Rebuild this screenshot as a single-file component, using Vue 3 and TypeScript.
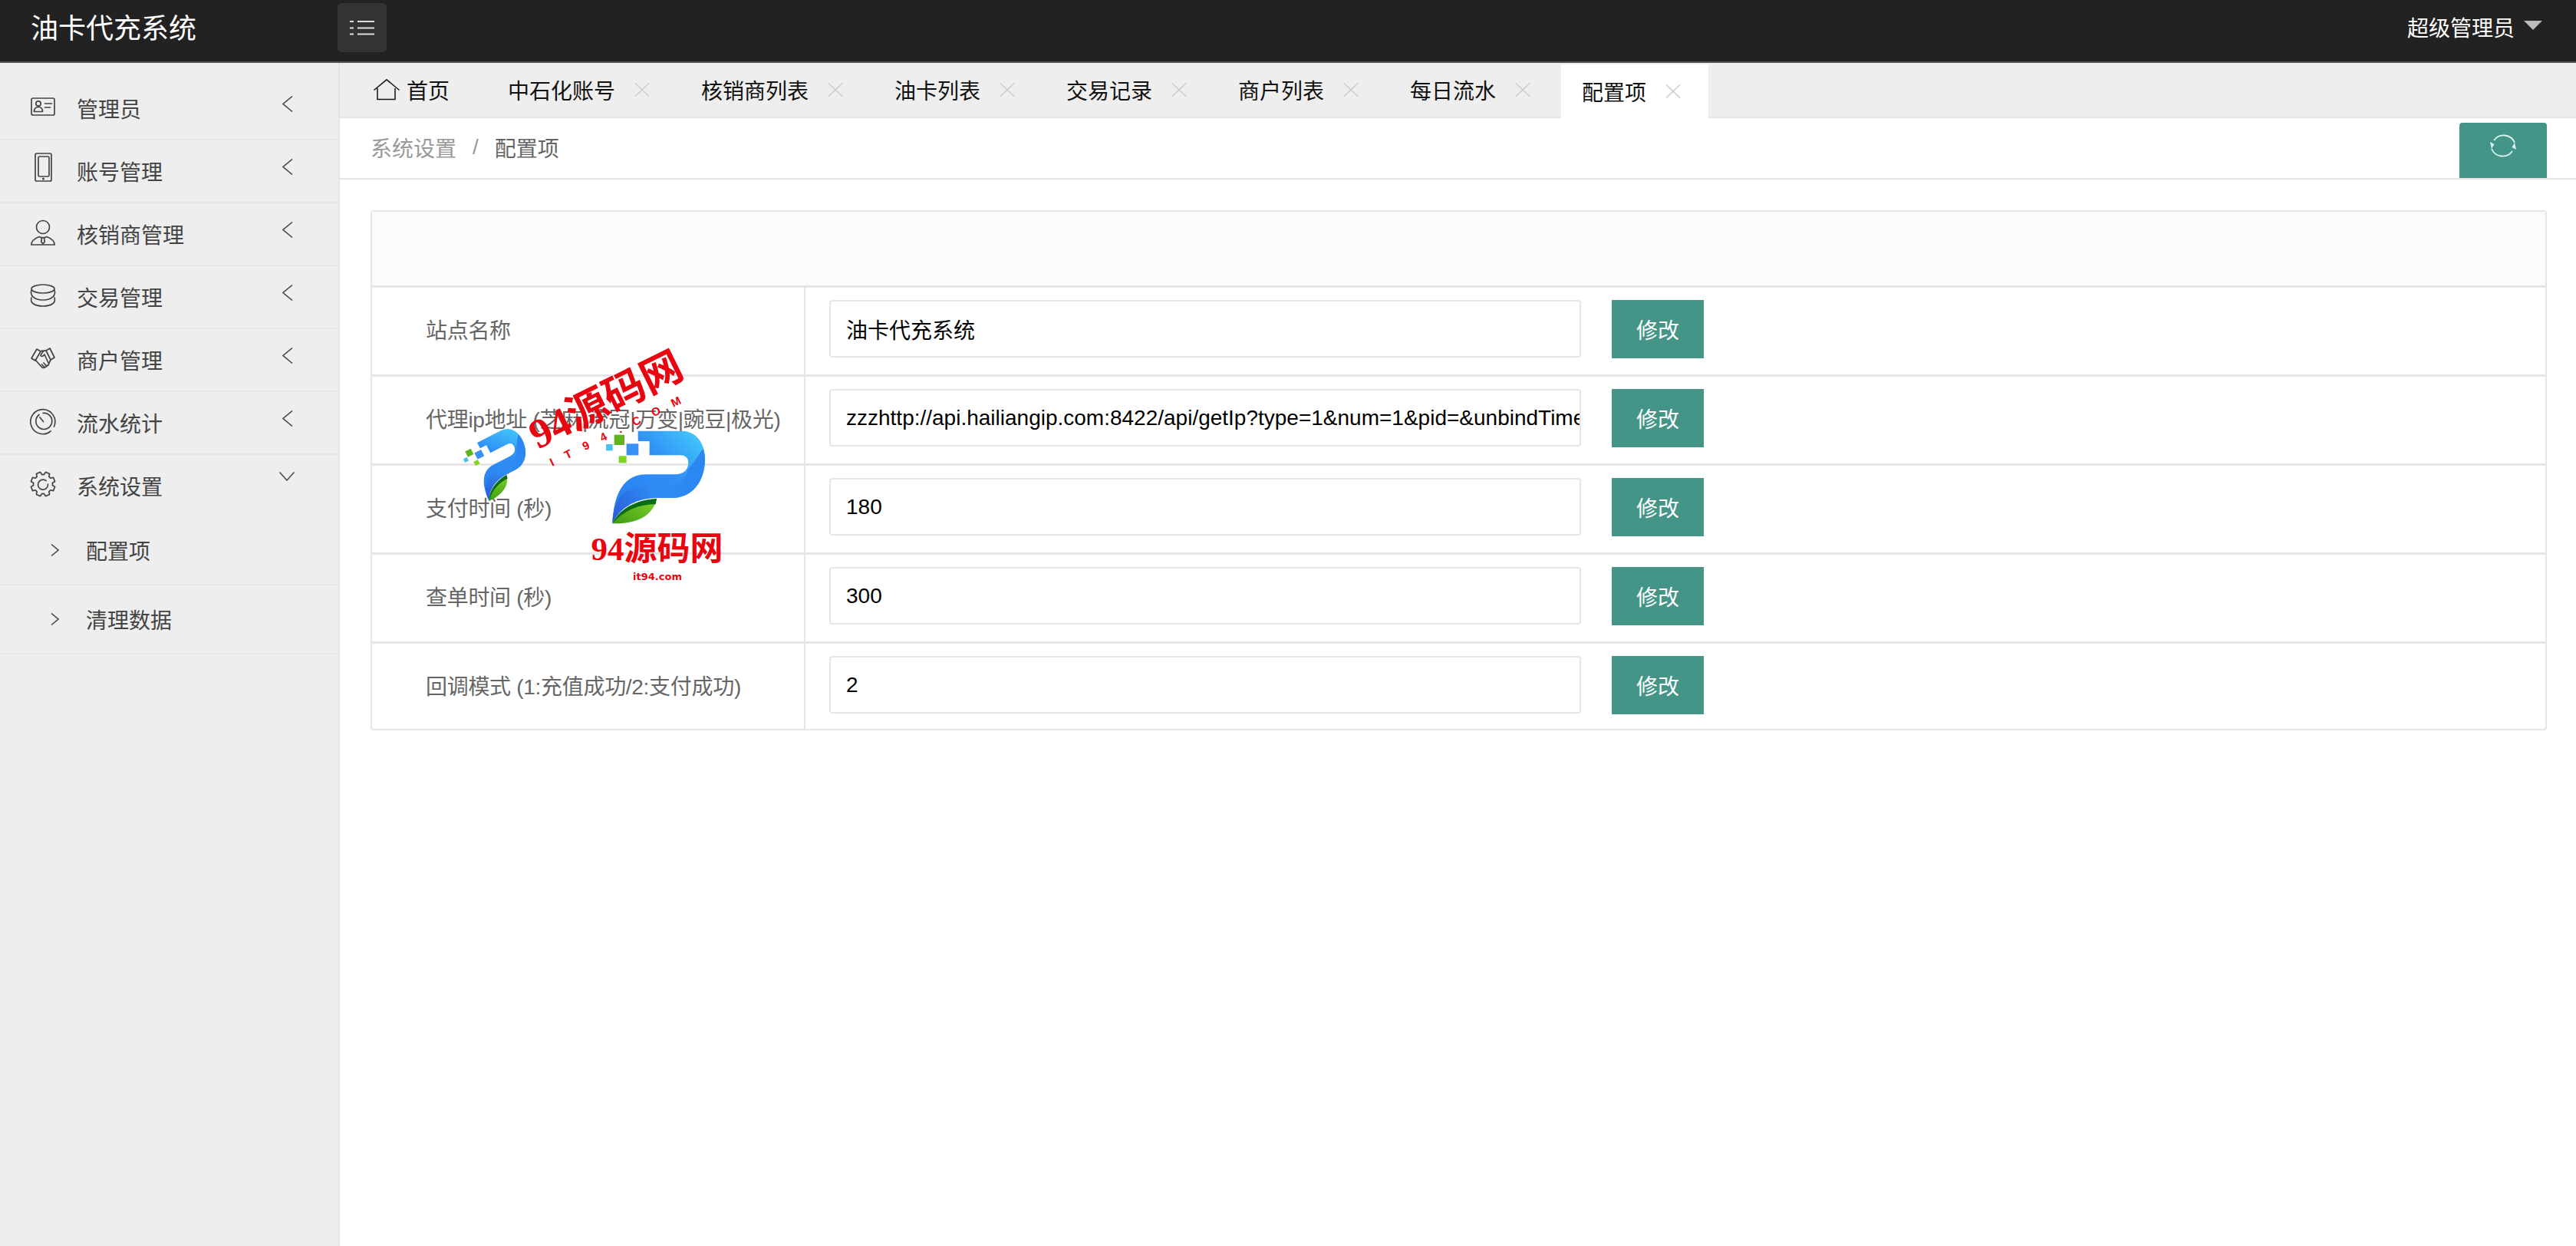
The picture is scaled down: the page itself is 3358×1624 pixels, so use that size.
<template>
  <div class="app">
    <header class="topbar">
      <div class="brand">油卡代充系统</div>
      <button class="toggle" type="button">
        <svg width="32" height="20" viewBox="0 0 32 20" fill="none" stroke="#ddd" stroke-width="2">
          <path d="M0 2h5M10 2h22M0 10.500h5M10 10.500h22M0 18.500h5M10 18.500h22" />
        </svg>
      </button>
      <div class="user">超级管理员<span class="caret" /></div>
    </header>

    <div class="body">
      <aside class="sidebar">
        <div v-for="item in menu" :key="item.label" class="menu-item" :class="{ open: item.open }">
          <svg class="menu-icon" width="32" height="40" viewBox="0 0 32 40" fill="none" stroke="#444"
               stroke-width="1.700" stroke-linecap="round" stroke-linejoin="round">
            <template v-if="item.icon === 'card'">
              <rect x="1" y="9" width="30" height="22" rx="2" />
              <circle cx="10" cy="16" r="3.200" />
              <path d="M4.500 26.500c0-4 2-6 5.500-6s5.500 2 5.500 6zM18.500 16h9M18.500 21h7" />
            </template>
            <template v-else-if="item.icon === 'tablet'">
              <rect x="6" y="-1" width="21" height="36" rx="2" />
              <rect x="10" y="3" width="14" height="26" rx="1.500" />
              <circle cx="16.500" cy="32" r="0.700" />
            </template>
            <template v-else-if="item.icon === 'person'">
              <circle cx="16" cy="13" r="8.500" />
              <path d="M0.800 36H31.200C31 30 26 27.500 21 25.500C18 27.200 14 27.200 11 25.500C6 27.500 1 30 0.800 36Z" />
              <path d="M14.500 27l-0.800 5 2.300 3 2.300-3-0.800-5" />
            </template>
            <template v-else-if="item.icon === 'coins'">
              <ellipse cx="16" cy="11.500" rx="15" ry="5.500" />
              <path d="M1 13C-1 20 4 26 16 26S33 20 31 13M1 23C-1 29 4 34 16 34S33 29 31 23" />
            </template>
            <template v-else-if="item.icon === 'hands'">
              <path d="M1 20L8 8L13 11L6 23ZM31 19L25 7L20 10L26 22Z" />
              <path d="M6 22L15 32C17 33 18 32 18 31C20 32 21 31 21 29C23 30 24 28 23.500 27L26 22" />
              <path d="M20 10C17 9 16 11 13 16C13 18 16 18 18 15L23.500 27M13 11C15 9.500 16 10 17.500 10.500M20.500 30L17 26M18 32L14.500 28" />
            </template>
            <template v-else-if="item.icon === 'dial'">
              <path d="M26 33A16 16 0 1 1 30.500 27" />
              <path d="M11 11.500A10.500 10.500 0 1 0 16 9.500" />
              <path d="M16.500 20.500L12 15" />
            </template>
            <template v-else>
              <path :d="gearPath" />
              <path d="M20 15.500A6.500 6.500 0 1 0 22.500 20" />
            </template>
          </svg>
          <span class="menu-label">{{ item.label }}</span>
          <svg v-if="item.open" class="arrow-open" width="20" height="12" viewBox="0 0 20 12" fill="none" stroke="#444" stroke-width="1.500">
            <path d="M0.500 0.500L10 11L19.500 0.500" />
          </svg>
          <svg v-else class="arrow" width="14" height="21" viewBox="0 0 14 21" fill="none" stroke="#444" stroke-width="1.500">
            <path d="M13 0.500L1 10.500L13 20.500" />
          </svg>
        </div>
        <div v-for="sub in subMenu" :key="sub" class="sub-item">
          <svg width="11" height="16" viewBox="0 0 11 16" fill="none" stroke="#444" stroke-width="1.500">
            <path d="M1 0.500L10 8L1 15.500" />
          </svg>
          <span>{{ sub }}</span>
        </div>
      </aside>

      <main class="main">
        <nav class="tabs">
          <div class="tab home">
            <svg width="34" height="28" viewBox="0 0 34 28" fill="none" stroke="#111" stroke-width="1.500">
              <path d="M0.500 14.500L17 0.800L33.500 14.500M5 12V26.500H28V12" />
            </svg>
            <span>首页</span>
          </div>
          <div v-for="tab in tabs" :key="tab" class="tab" :class="{ active: tab === activeTab }">
            <span>{{ tab }}</span>
            <svg width="20" height="18" viewBox="0 0 20 18" stroke="#ccc" stroke-width="1.500">
              <path d="M1 0.500L19 17.500M19 0.500L1 17.500" />
            </svg>
          </div>
        </nav>

        <div class="crumbs">
          <span class="crumb-parent">系统设置</span>
          <span class="crumb-sep">/</span>
          <span class="crumb-current">配置项</span>
          <button class="refresh" type="button">
            <svg width="36" height="36" viewBox="0 0 36 36" fill="none" stroke="#d8f5ef" stroke-width="1.800">
              <path d="M6 11A15.500 15.500 0 0 1 33 14M30 25A15.500 15.500 0 0 1 3 22" />
              <path d="M3 22L1 13L6.500 16ZM33 14L35 23L29.500 20Z" fill="#d8f5ef" stroke="none" />
            </svg>
          </button>
        </div>

        <section class="settings">
          <div class="settings-head" />
          <div v-for="row in rows" :key="row.label" class="row">
            <div class="row-label">{{ row.label }}</div>
            <div class="row-field">
              <input class="field" type="text" readonly :value="row.value">
              <button class="save" type="button">修改</button>
            </div>
          </div>
        </section>
      </main>
    </div>

    <!-- site watermark stamped over the page -->
    <svg class="watermark" width="370" height="330" viewBox="590 440 370 330">
      <defs>
        <linearGradient id="pLight" x1="0" y1="1" x2="1" y2="0">
          <stop offset="0" stop-color="#2a7cf0" />
          <stop offset="0.600" stop-color="#2f8ff5" />
          <stop offset="1" stop-color="#45d0fb" />
        </linearGradient>
        <linearGradient id="pDark" x1="0" y1="1" x2="1" y2="0.300">
          <stop offset="0" stop-color="#2a58d8" />
          <stop offset="0.500" stop-color="#2e8cf3" />
          <stop offset="1" stop-color="#2b86f2" />
        </linearGradient>
        <linearGradient id="leaf" x1="0" y1="1" x2="1" y2="0">
          <stop offset="0" stop-color="#3f9a12" />
          <stop offset="1" stop-color="#7fd42a" />
        </linearGradient>
        <g id="pMark">
          <path fill="url(#leaf)" d="M85 397C110 345 170 305 258 300C245 360 190 400 85 397Z" />
          <path fill="#0a6d16" d="M85 397C110 345 170 305 258 300L254 322C190 322 130 345 85 397Z" />
          <path fill="url(#pLight)" d="M185 35H355C415 35 447 85 447 145C447 235 395 297 320 297H250C170 300 110 340 85 397C88 320 110 205 215 205H330C365 205 382 185 382 160C382 140 370 130 350 130H230V75H185Z" />
          <path fill="url(#pDark)" d="M85 397C88 340 105 300 125 280C150 258 190 247 240 247H320C350 245 370 225 380 185C400 170 425 120 440 105C446 120 447 132 447 145C447 235 395 297 320 297H250C170 300 110 340 85 397Z" />
          <rect x="92" y="50" width="40" height="40" fill="#5fb51e" />
          <rect x="60" y="87" width="26" height="25" fill="#4cc0f5" />
          <rect x="140" y="85" width="47" height="45" fill="#3a90f5" />
          <rect x="110" y="133" width="30" height="27" fill="#7ed321" />
        </g>
      </defs>
      <use href="#pMark" transform="translate(622 577) rotate(-27) scale(0.2067) translate(-185 -35)" />
      <use href="#pMark" transform="translate(770 550) scale(0.3333)" />
      <text class="stamp" font-size="54" text-anchor="middle" transform="translate(798 538) rotate(-26.400)">94源码网</text>
      <text class="stamp-sub" font-size="15" letter-spacing="17" text-anchor="middle" transform="translate(812 563) rotate(-26)">IT94.COM</text>
      <text class="stamp" font-size="43" text-anchor="middle" x="856.500" y="730">94源码网</text>
      <text class="stamp-url" font-size="13" text-anchor="middle" x="857" y="756">it94.com</text>
    </svg>
  </div>
</template>

<script setup lang="ts">
interface MenuItem {
  label: string
  icon: string
  open?: boolean
}

const menu: MenuItem[] = [
  { label: "管理员", icon: "card" },
  { label: "账号管理", icon: "tablet" },
  { label: "核销商管理", icon: "person" },
  { label: "交易管理", icon: "coins" },
  { label: "商户管理", icon: "hands" },
  { label: "流水统计", icon: "dial" },
  { label: "系统设置", icon: "gear", open: true },
];

const subMenu = ["配置项", "清理数据"];

const tabs = ["中石化账号", "核销商列表", "油卡列表", "交易记录", "商户列表", "每日流水", "配置项"];
const activeTab = "配置项";

const rows = [
  { label: "站点名称", value: "油卡代充系统" },
  { label: "代理ip地址 (芝麻|流冠|万变|豌豆|极光)", value: "zzzhttp://api.hailiangip.com:8422/api/getIp?type=1&num=1&pid=&unbindTime=180&cid=&orderId=O2" },
  { label: "支付时间 (秒)", value: "180" },
  { label: "查单时间 (秒)", value: "300" },
  { label: "回调模式 (1:充值成功/2:支付成功)", value: "2" },
];

// eight toothed outline, centred in the 32x40 icon box
const gearPath = (() => {
  const polar = (r: number, deg: number) => {
    const a = (deg * Math.PI) / 180;
    return `${(16 + r * Math.cos(a)).toFixed(2)} ${(20 + r * Math.sin(a)).toFixed(2)}`;
  };
  const points: string[] = [];
  for (let i = 0; i < 8; i++) {
    const mid = i * 45 + 22.5;
    points.push(polar(12.5, mid - 16), polar(16, mid - 10), polar(16, mid + 10), polar(12.5, mid + 16));
  }
  return `M${points.join("L")}Z`;
})();
</script>

<style scoped>
.app {
  position: relative;
  display: flex;
  flex-direction: column;
  height: 1624px;
  overflow: hidden;
  font-family: "Liberation Sans", "Noto Sans CJK SC", sans-serif;
  font-size: 28px;
  background: #fff;
}

.topbar {
  display: flex;
  align-items: center;
  height: 72px;
  padding-bottom: 8px;
  flex-shrink: 0;
  background: #222;
  border-bottom: 2px solid #555;
}

.brand {
  width: 400px;
  margin-bottom: 4px;
  padding-left: 40px;
  color: #fff;
  font-size: 36px;
}

.toggle {
  display: flex;
  align-items: center;
  justify-content: center;
  width: 64px;
  height: 64px;
  padding: 0;
  border: 0;
  border-radius: 5px;
  background: #333;
}

.user {
  display: flex;
  align-items: center;
  margin-left: auto;
  margin-right: 44px;
  margin-bottom: 2px;
  color: #fff;
}

.caret {
  width: 0;
  height: 0;
  margin-left: 12px;
  margin-bottom: 4px;
  border-left: 12px solid transparent;
  border-right: 12px solid transparent;
  border-top: 12px solid #bbb;
}

.body {
  display: flex;
  flex: 1;
  min-height: 0;
}

.sidebar {
  width: 441px;
  padding-top: 19px;
  flex-shrink: 0;
  background: #eee;
  border-right: 2px solid #e4e4e4;
  color: #444;
}

.menu-item {
  display: flex;
  align-items: center;
  height: 80px;
  padding-left: 40px;
  border-bottom: 2px solid #e6e6e6;
}

.menu-item.open {
  border-bottom: 0;
}

.menu-icon {
  overflow: visible;
  margin-bottom: 4px;
}

.menu-label {
  margin-left: 28px;
}

.arrow {
  margin-left: auto;
  margin-right: 59px;
  margin-bottom: 12px;
}

.arrow-open {
  margin-left: auto;
  margin-right: 57px;
  margin-bottom: 24px;
}

.sub-item {
  display: flex;
  align-items: center;
  height: 88px;
  padding-left: 66px;
  border-bottom: 2px solid #e6e6e6;
}

.sub-item span {
  margin-left: 35px;
}

.main {
  flex: 1;
  min-width: 0;
}

.tabs {
  display: flex;
  gap: 4px;
  height: 70px;
  padding-left: 16px;
  background: #eee;
  border-bottom: 2px solid #e6e6e6;
}

.tab {
  display: flex;
  align-items: center;
  height: 70px;
  padding: 0 36px 0 28px;
  color: #111;
}

.tab span {
  margin-left: -1px;
  margin-right: 1px;
}

.tab svg {
  margin-left: 24px;
}

.tab.home {
  padding-right: 44px;
}

.tab.home svg {
  margin: 0 10px 0 0;
}

.tab.active {
  margin-top: 2px;
  padding-bottom: 2px;
  background: #fff;
  border-radius: 2px 2px 0 0;
}

.crumbs {
  display: flex;
  align-items: center;
  height: 76px;
  padding: 0 38px 2px 40px;
  border-bottom: 2px solid #e6e6e6;
}

.crumb-parent {
  color: #999;
}

.crumb-sep {
  margin: 0 21px;
  color: #999;
}

.crumb-current {
  color: #666;
}

.refresh {
  display: flex;
  justify-content: center;
  align-self: flex-end;
  width: 114px;
  height: 72px;
  margin-left: auto;
  margin-bottom: -2px;
  padding: 12px 0 0;
  border: 0;
  border-radius: 4px 4px 0 0;
  background: #449587;
}

.settings {
  margin: 40px 38px 0 40px;
  border: 2px solid #e6e6e6;
  border-radius: 4px;
}

.settings-head {
  height: 96px;
  background: #fbfbfb;
}

.row {
  display: flex;
  height: 113px;
  border-top: 3px solid #e6e6e6;
}

.row:first-of-type {
  border-top-width: 2px;
}

.row:last-child {
  height: 111px;
}

.row-label {
  display: flex;
  align-items: center;
  width: 565px;
  padding: 0 0 5px 70px;
  box-sizing: border-box;
  border-right: 2px solid #e6e6e6;
  color: #666;
  letter-spacing: -0.3px;
}

.row:last-child .row-label {
  padding-bottom: 3px;
}

.row-field {
  display: flex;
  align-items: center;
  gap: 40px;
  padding: 0 0 6px 31px;
}

.row:last-child .row-field {
  padding-bottom: 4px;
}

.field {
  width: 980px;
  height: 75px;
  padding: 0 0 0 20px;
  box-sizing: border-box;
  border: 2px solid #e6e6e6;
  border-radius: 4px;
  outline: 0;
  font-family: "Liberation Sans", "Noto Sans CJK SC", sans-serif;
  font-size: 28px;
  color: #000;
}

.save {
  width: 120px;
  height: 76px;
  padding: 0;
  border: 0;
  background: #449587;
  color: #fff;
  font-family: inherit;
  font-size: 28px;
}

.watermark {
  position: absolute;
  left: 590px;
  top: 440px;
  pointer-events: none;
}

.stamp {
  font-family: "Liberation Serif", "Noto Sans CJK SC", serif;
  font-weight: 700;
  fill: #e8050f;
}

.stamp-sub {
  font-family: "Liberation Sans", sans-serif;
  font-weight: 700;
  fill: #e8050f;
}

.stamp-url {
  font-family: "DejaVu Sans", sans-serif;
  font-weight: 700;
  fill: #e8050f;
}
</style>

<style>
body {
  margin: 0;
}
</style>
